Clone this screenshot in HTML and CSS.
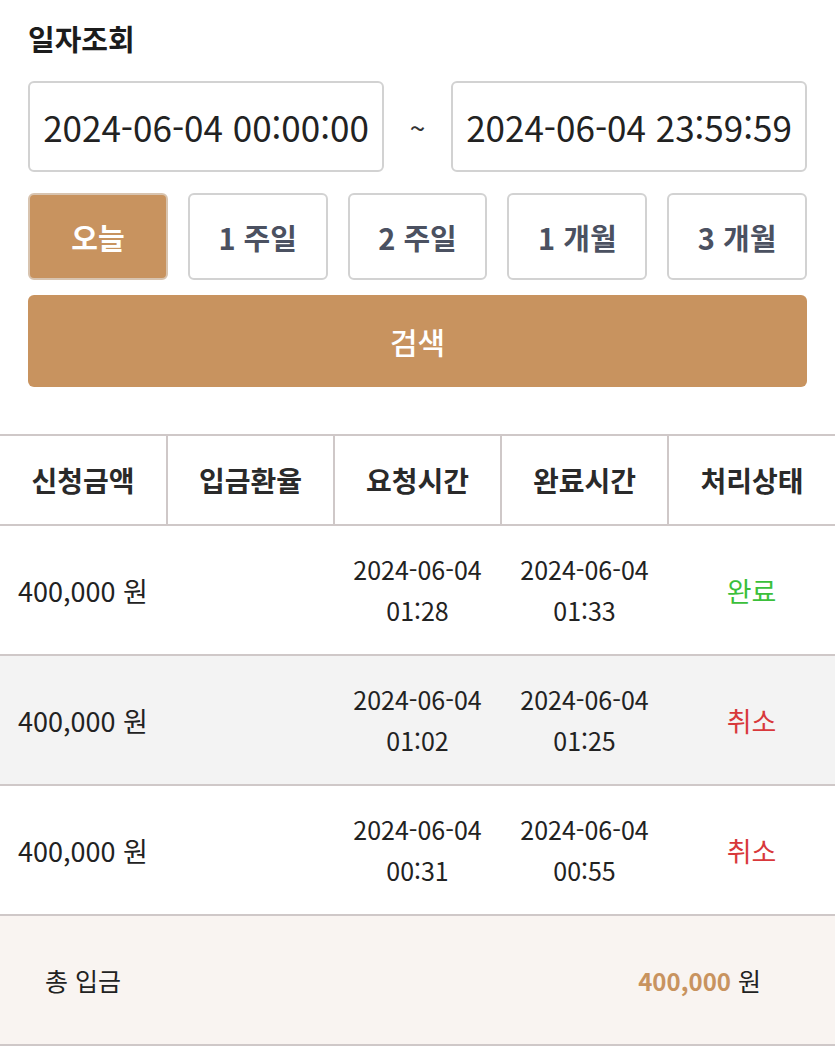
FILE: index.html
```html
<!DOCTYPE html>
<html lang="ko">
<head>
    <meta charset="UTF-8">
    <meta name="viewport" content="width=device-width, initial-scale=1.0">
    <title>일자조회</title>
    <link rel="stylesheet" href="styles.css">
</head>
<body>
    <div class="search">
        <h1>일자조회</h1>
        <div class="range">
            <div class="date-box">2024-06-04 00:00:00</div>
            <span class="tilde">~</span>
            <div class="date-box">2024-06-04 23:59:59</div>
        </div>
        <div class="periods">
            <button class="period active">오늘</button>
            <button class="period">1 주일</button>
            <button class="period">2 주일</button>
            <button class="period">1 개월</button>
            <button class="period">3 개월</button>
        </div>
        <button class="search-btn">검색</button>
    </div>

    <table class="list">
        <thead>
            <tr>
                <th>신청금액</th>
                <th>입금환율</th>
                <th>요청시간</th>
                <th>완료시간</th>
                <th>처리상태</th>
            </tr>
        </thead>
        <tbody>
            <tr>
                <td class="amount">400,000 원</td>
                <td></td>
                <td>2024-06-04<br>01:28</td>
                <td>2024-06-04<br>01:33</td>
                <td class="done">완료</td>
            </tr>
            <tr class="alt">
                <td class="amount">400,000 원</td>
                <td></td>
                <td>2024-06-04<br>01:02</td>
                <td>2024-06-04<br>01:25</td>
                <td class="cancel">취소</td>
            </tr>
            <tr>
                <td class="amount">400,000 원</td>
                <td></td>
                <td>2024-06-04<br>00:31</td>
                <td>2024-06-04<br>00:55</td>
                <td class="cancel">취소</td>
            </tr>
        </tbody>
    </table>

    <div class="total">
        <span>총 입금</span>
        <span><b>400,000</b> 원</span>
    </div>
</body>
</html>
```

FILE: styles.css
```css
* {
    box-sizing: border-box;
    font-family: "Noto Sans CJK KR", "Noto Sans", sans-serif;
}
body {
    margin: 0;
    background-color: #ffffff;
    color: #222222;
}
.search {
    padding: 18px 28px 0 28px;
}
h1 {
    margin: 0 0 23px 0;
    font-size: 29px;
    font-weight: 700;
    line-height: 40px;
    color: #1c1c1c;
}
.range {
    display: flex;
    align-items: center;
}
.date-box {
    flex: 0 0 356px;
    height: 91px;
    border: 2px solid #d2d2d2;
    border-radius: 6px;
    display: flex;
    align-items: center;
    justify-content: center;
    font-size: 35px;
    color: #222222;
}
.tilde {
    flex: 1;
    text-align: center;
    font-size: 28px;
    color: #333333;
}
.periods {
    display: grid;
    grid-template-columns: repeat(5, 1fr);
    gap: 20px;
    margin-top: 21px;
}
.period {
    height: 87px;
    border: 2px solid #d2d2d2;
    border-radius: 6px;
    background-color: #ffffff;
    font-size: 29px;
    font-weight: 700;
    color: #4b5161;
    padding: 0;
}
.period.active {
    background-color: #c8935f;
    border-color: #d8c4b0;
    color: #ffffff;
}
.search-btn {
    display: block;
    width: 100%;
    height: 92px;
    margin-top: 15px;
    border: none;
    border-radius: 6px;
    background-color: #c8935f;
    color: #ffffff;
    font-size: 30px;
    font-weight: 500;
}
.list {
    width: 100%;
    margin-top: 47px;
    border-collapse: collapse;
    table-layout: fixed;
}
.list th {
    height: 90px;
    font-size: 28px;
    font-weight: 700;
    color: #2a2a2a;
    border-top: 2px solid #cfc8c8;
    border-bottom: 2px solid #cfc8c8;
    border-left: 2px solid #cfc8c8;
}
.list th:first-child {
    border-left: none;
}
.list td {
    height: 130px;
    font-size: 25px;
    line-height: 41px;
    text-align: center;
    color: #222222;
    border-bottom: 2px solid #cfc8c8;
}
.list tr.alt td {
    background-color: #f3f3f3;
}
.list td.amount {
    text-align: left;
    padding-left: 18px;
    font-size: 27px;
}
.list td.done {
    color: #3bbf3b;
    font-size: 27px;
}
.list td.cancel {
    color: #d8383b;
    font-size: 27px;
}
.total {
    display: flex;
    justify-content: space-between;
    align-items: center;
    height: 130px;
    padding: 0 74px 0 45px;
    background-color: #f9f4f1;
    border-bottom: 2px solid #cfc8c8;
    font-size: 25px;
    color: #222222;
}
.total b {
    color: #c8935f;
    font-weight: 700;
    font-size: 24px;
}
```
